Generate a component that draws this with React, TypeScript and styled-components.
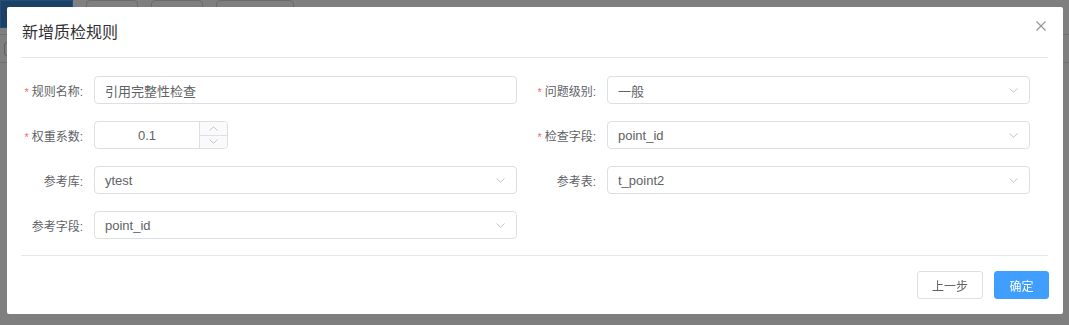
import React from "react";
import styled, { createGlobalStyle } from "styled-components";

const Global = createGlobalStyle`
  html, body { margin: 0; padding: 0; background: #fff; }
  body { font-family: "Liberation Sans", "Noto Sans CJK SC", sans-serif; }
  * { box-sizing: border-box; }
`;

const Page = styled.div`
  width: 1069px;
  height: 325px;
  overflow: hidden;
`;

const TabBar = styled.div`
  display: flex;
  gap: 13px;
  height: 35px;
  border-bottom: 1px solid #dcdfe6;
`;

const Tab = styled.div<{ $active?: boolean; $w: number }>`
  width: ${(p) => p.$w}px;
  height: 28px;
  border: 1px solid ${(p) => (p.$active ? "#409eff" : "#d3d6dc")};
  border-radius: ${(p) => (p.$active ? "0" : "4px")};
  background: ${(p) => (p.$active ? "#3b82c9" : "#fff")};
  color: ${(p) => (p.$active ? "#fff" : "#606266")};
  font-size: 12px;
  display: flex;
  align-items: center;
  justify-content: center;
`;

const Toolbar = styled.div`
  height: 28px;
  border-bottom: 1px solid #dcdfe6;
  display: flex;
  align-items: center;
  padding-left: 4px;
`;

const ToolInput = styled.div`
  width: 120px;
  height: 14px;
  border: 1px solid #b8bcc4;
  border-radius: 3px;
`;

const Mask = styled.div`
  position: fixed;
  inset: 0;
  background: rgba(0, 0, 0, 0.5);
  padding: 7px;
`;

const Dialog = styled.div`
  width: 1056px;
  height: 307px;
  background: #fff;
  border-radius: 2px;
  display: flex;
  flex-direction: column;
`;

const Header = styled.div`
  height: 51px;
  margin: 0 15px 0 14px;
  border-bottom: 1px solid #e4e7ed;
  display: flex;
  align-items: center;
  justify-content: space-between;
`;

const Title = styled.div`
  font-size: 16px;
  color: #303133;
  padding-left: 1px;
  line-height: 24px;
  margin-top: 1px;
`;

const Close = styled.div`
  align-self: flex-start;
  margin-top: 14px;
  margin-right: 2px;
  width: 10px;
  height: 10px;
  display: flex;
`;

const Body = styled.div`
  margin: 0 15px 0 14px;
  padding: 18px 0 16px 1px;
  border-bottom: 1px solid #e4e7ed;
  display: grid;
  grid-template-columns: 513px 513px;
  row-gap: 17px;
`;

const Item = styled.div`
  display: flex;
  align-items: center;
  height: 28px;
  padding-right: 18px;
`;

const Label = styled.label`
  width: 72px;
  flex: none;
  text-align: right;
  padding-right: 11px;
  font-size: 12px;
  color: #606266;
  white-space: nowrap;
`;

const Star = styled.span`
  color: #f56c6c;
  margin-right: 3px;
  font-size: 11px;
`;

const Field = styled.div`
  flex: 1;
  height: 28px;
  border: 1px solid #dcdfe6;
  border-radius: 4px;
  display: flex;
  align-items: center;
  padding: 0 10px;
  font-size: 13px;
  color: #606266;
  justify-content: space-between;
`;

const NumberBox = styled.div`
  width: 134px;
  height: 28px;
  border: 1px solid #dcdfe6;
  border-radius: 4px;
  display: flex;
  overflow: hidden;
`;

const NumberValue = styled.div`
  flex: 1;
  display: flex;
  align-items: center;
  justify-content: center;
  font-size: 13px;
  color: #606266;
`;

const Stepper = styled.div`
  width: 28px;
  border-left: 1px solid #dcdfe6;
  display: flex;
  flex-direction: column;
  background: #fafafa;
`;

const StepBtn = styled.div<{ $top?: boolean }>`
  flex: 1;
  display: flex;
  align-items: center;
  justify-content: center;
  border-bottom: ${(p) => (p.$top ? "1px solid #dcdfe6" : "none")};
`;

const Footer = styled.div`
  display: flex;
  justify-content: flex-end;
  gap: 11px;
  padding: 15px 14px 14px;
`;

const Button = styled.button<{ $primary?: boolean }>`
  height: 28px;
  width: ${(p) => (p.$primary ? 55 : 66)}px;
  border-radius: 3px;
  font-family: inherit;
  font-size: 12px;
  border: 1px solid ${(p) => (p.$primary ? "#409eff" : "#dcdfe6")};
  background: ${(p) => (p.$primary ? "#409eff" : "#fff")};
  color: ${(p) => (p.$primary ? "#fff" : "#606266")};
  padding: 0;
`;

const Chevron = ({ up }: { up?: boolean }) => (
  <svg width="9" height="5" viewBox="0 0 9 5">
    <path
      d={up ? "M0.5 4.5 L4.5 0.8 L8.5 4.5" : "M0.5 0.5 L4.5 4.2 L8.5 0.5"}
      fill="none"
      stroke="#c0c4cc"
      strokeWidth="1"
    />
  </svg>
);

const SelectField = ({ value }: { value: string }) => (
  <Field>
    <span>{value}</span>
    <span style={{ display: "flex", marginRight: 1 }}>
      <Chevron />
    </span>
  </Field>
);

export default function App() {
  return (
    <>
      <Global />
      <Page>
        <TabBar>
          <Tab $active $w={73}>质检规则</Tab>
          <Tab $w={52}>数据</Tab>
          <Tab $w={52}>日志</Tab>
          <Tab $w={78}>公共配置</Tab>
        </TabBar>
        <Toolbar>
          <ToolInput />
        </Toolbar>
      </Page>
      <Mask>
        <Dialog>
          <Header>
            <Title>新增质检规则</Title>
            <Close>
              <svg width="10" height="10" viewBox="0 0 10 10">
                <path d="M0.5 0.5 L9.5 9.5 M9.5 0.5 L0.5 9.5" stroke="#909399" strokeWidth="1.1" />
              </svg>
            </Close>
          </Header>
          <Body>
            <Item>
              <Label><Star>*</Star>规则名称:</Label>
              <Field>引用完整性检查</Field>
            </Item>
            <Item>
              <Label><Star>*</Star>问题级别:</Label>
              <SelectField value="一般" />
            </Item>
            <Item>
              <Label><Star>*</Star>权重系数:</Label>
              <NumberBox>
                <NumberValue>0.1</NumberValue>
                <Stepper>
                  <StepBtn $top><Chevron up /></StepBtn>
                  <StepBtn><Chevron /></StepBtn>
                </Stepper>
              </NumberBox>
            </Item>
            <Item>
              <Label><Star>*</Star>检查字段:</Label>
              <SelectField value="point_id" />
            </Item>
            <Item>
              <Label>参考库:</Label>
              <SelectField value="ytest" />
            </Item>
            <Item>
              <Label>参考表:</Label>
              <SelectField value="t_point2" />
            </Item>
            <Item>
              <Label>参考字段:</Label>
              <SelectField value="point_id" />
            </Item>
          </Body>
          <Footer>
            <Button>上一步</Button>
            <Button $primary>确定</Button>
          </Footer>
        </Dialog>
      </Mask>
    </>
  );
}
